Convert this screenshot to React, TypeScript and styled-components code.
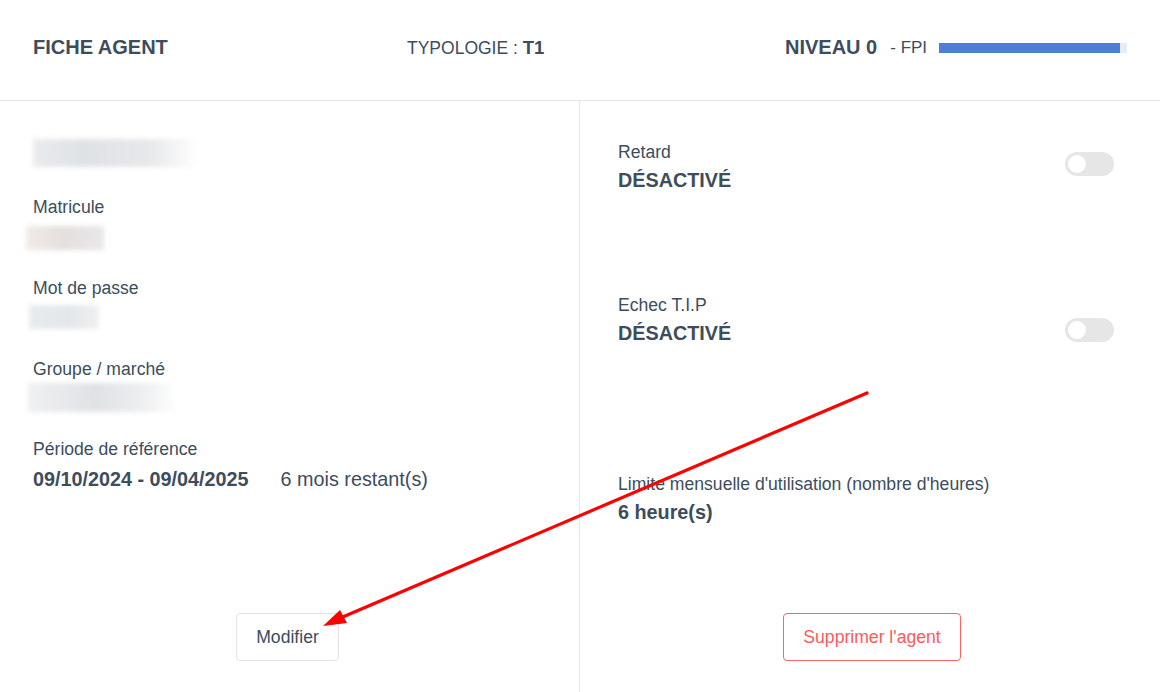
import React from "react";
import styled, { createGlobalStyle } from "styled-components";

const Global = createGlobalStyle`
  html, body { margin: 0; padding: 0; background: #fff; }
  body { font-family: "Liberation Sans", Arial, sans-serif; color: #3d4d5c; }
  * { box-sizing: border-box; }
`;

const Page = styled.div`
  position: relative;
  width: 1160px;
  height: 692px;
  overflow: hidden;
  display: flex;
  flex-direction: column;
`;

const Header = styled.header`
  height: 101px;
  flex: none;
  display: flex;
  align-items: center;
  padding: 0 0 5px 33px;
  border-bottom: 1px solid #e8e8e8;
`;

const Title = styled.h1`
  margin: 0;
  width: 374px;
  font-size: 20px;
  font-weight: 700;
  color: #3d4d5c;
`;

const Typology = styled.div`
  width: 378px;
  font-size: 17.5px;
  color: #3d4d5c;
  b { font-size: 18.5px; font-weight: 700; }
`;

const Level = styled.div`
  display: flex;
  align-items: center;
  font-size: 20px;
  font-weight: 700;
  color: #3d4d5c;
`;

const Fpi = styled.span`
  font-size: 17px;
  font-weight: 400;
  margin-left: 13px;
`;

const Track = styled.div`
  width: 188px;
  height: 10px;
  margin-left: 12px;
  background: #e8ebef;
`;

const Fill = styled.div`
  height: 100%;
  background: #4f7ed7;
`;

const Body = styled.div`
  flex: 1;
  display: grid;
  grid-template-columns: 579px 1fr;
`;

const Column = styled.section<{ $divider?: boolean }>`
  display: flex;
  flex-direction: column;
  padding: 0 0 31px 0;
  border-left: ${(p) => (p.$divider ? "1px solid #e8e8e8" : "none")};
`;

const Fields = styled.div<{ $pl: number }>`
  display: flex;
  flex-direction: column;
  padding-left: ${(p) => p.$pl}px;
`;

const Field = styled.div<{ $mt: number }>`
  display: flex;
  flex-direction: column;
  margin-top: ${(p) => p.$mt}px;
`;

const Label = styled.div`
  font-size: 17.6px;
  line-height: 20px;
  color: #3d4d5c;
`;

const Strong = styled.div`
  font-size: 19.8px;
  line-height: 22px;
  font-weight: 700;
  margin-top: 7px;
  color: #3d4d5c;
`;

const Value = styled.div`
  display: flex;
  align-items: baseline;
  font-size: 19.8px;
  line-height: 22px;
  margin-top: 9px;
  color: #3d4d5c;
  b { font-weight: 700; margin-right: 32px; }
`;

const Blur = styled.div<{ $w: number; $h: number; $dx: number; $mt: number; $bg: string }>`
  width: ${(p) => p.$w}px;
  height: ${(p) => p.$h}px;
  margin-left: ${(p) => p.$dx}px;
  margin-top: ${(p) => p.$mt}px;
  background: ${(p) => p.$bg};
  filter: blur(2.5px);
`;

const ToggleRow = styled.div<{ $mt: number }>`
  display: flex;
  justify-content: space-between;
  align-items: flex-start;
  margin-top: ${(p) => p.$mt}px;
  padding-right: 46px;
`;

const Toggle = styled.div<{ $mt: number }>`
  width: 49px;
  height: 24px;
  border-radius: 12px;
  background: #e6e6e6;
  margin-top: ${(p) => p.$mt}px;
  position: relative;
  &::after {
    content: "";
    position: absolute;
    left: 3px;
    top: 3px;
    width: 18px;
    height: 18px;
    border-radius: 50%;
    background: #fff;
  }
`;

const Actions = styled.div<{ $shift: number }>`
  margin-top: auto;
  display: flex;
  justify-content: center;
  padding-left: ${(p) => Math.max(p.$shift, 0)}px;
  padding-right: ${(p) => Math.max(-p.$shift, 0)}px;
`;

const Button = styled.button<{ $danger?: boolean }>`
  font-family: "Liberation Sans", Arial, sans-serif;
  height: 48px;
  padding: 0;
  background: #fff;
  border-radius: 4px;
  font-size: 17.6px;
  color: ${(p) => (p.$danger ? "#fd5b5b" : "#3d4d5c")};
  border: 1px solid ${(p) => (p.$danger ? "#fd6565" : "#e3e3e3")};
  width: ${(p) => (p.$danger ? "178px" : "103px")};
`;

const Overlay = styled.svg`
  position: absolute;
  left: 0;
  top: 0;
  pointer-events: none;
`;

export default function App() {
  return (
    <Page>
      <Global />
      <Header>
        <Title>FICHE AGENT</Title>
        <Typology>
          TYPOLOGIE : <b>T1</b>
        </Typology>
        <Level>
          NIVEAU 0<Fpi>- FPI</Fpi>
          <Track>
            <Fill style={{ width: `${(181 / 188) * 100}%` }} />
          </Track>
        </Level>
      </Header>
      <Body>
        <Column>
          <Fields $pl={33}>
            <Blur $w={166} $h={28} $dx={0} $mt={38} $bg="linear-gradient(90deg,#e9ebed,#dfe2e5 30%,#e6e8ea 70%,#fff)" />
            <Field $mt={30}>
              <Label>Matricule</Label>
              <Blur $w={78} $h={24} $dx={-7} $mt={9} $bg="linear-gradient(90deg,#f0ebe7,#e3dfdd 50%,#e9e8e8)" />
            </Field>
            <Field $mt={28}>
              <Label>Mot de passe</Label>
              <Blur $w={70} $h={24} $dx={-4} $mt={7} $bg="linear-gradient(90deg,#e8ebee,#e4e7ea 60%,#eff0f1)" />
            </Field>
            <Field $mt={30}>
              <Label>Groupe / marché</Label>
              <Blur $w={150} $h={29} $dx={-5} $mt={4} $bg="linear-gradient(90deg,#eff0f1,#dfe2e5 45%,#eceeef 75%,#fff)" />
            </Field>
            <Field $mt={27}>
              <Label>Période de référence</Label>
              <Value>
                <b>09/10/2024 - 09/04/2025</b>6 mois restant(s)
              </Value>
            </Field>
          </Fields>
          <Actions $shift={-4}>
            <Button>Modifier</Button>
          </Actions>
        </Column>
        <Column $divider>
          <Fields $pl={38}>
            <ToggleRow $mt={41}>
              <div>
                <Label>Retard</Label>
                <Strong>DÉSACTIVÉ</Strong>
              </div>
              <Toggle $mt={10} />
            </ToggleRow>
            <ToggleRow $mt={104}>
              <div>
                <Label>Echec T.I.P</Label>
                <Strong>DÉSACTIVÉ</Strong>
              </div>
              <Toggle $mt={23} />
            </ToggleRow>
            <Field $mt={130}>
              <Label>Limite mensuelle d'utilisation (nombre d'heures)</Label>
              <Strong>6 heure(s)</Strong>
            </Field>
          </Fields>
          <Actions $shift={4}>
            <Button $danger>Supprimer l'agent</Button>
          </Actions>
        </Column>
      </Body>
      <Overlay width="1160" height="692" viewBox="0 0 1160 692">
        <line x1="867" y1="393" x2="338" y2="619" stroke="#f00" strokeWidth="3.2" strokeLinecap="round" />
        <polygon points="323,626 340,610 347,623" fill="#f00" />
      </Overlay>
    </Page>
  );
}
